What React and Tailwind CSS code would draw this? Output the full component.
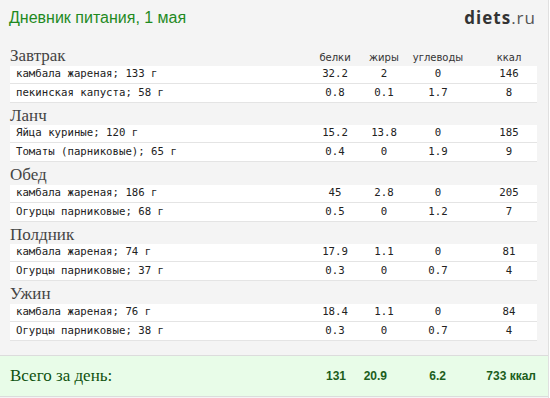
import React from "react";

const sections = [
  {
    title: "Завтрак",
    rows: [
      ["камбала жареная; 133 г", "32.2", "2", "0", "146"],
      ["пекинская капуста; 58 г", "0.8", "0.1", "1.7", "8"],
    ],
  },
  {
    title: "Ланч",
    rows: [
      ["Яйца куриные; 120 г", "15.2", "13.8", "0", "185"],
      ["Томаты (парниковые); 65 г", "0.4", "0", "1.9", "9"],
    ],
  },
  {
    title: "Обед",
    rows: [
      ["камбала жареная; 186 г", "45", "2.8", "0", "205"],
      ["Огурцы парниковые; 68 г", "0.5", "0", "1.2", "7"],
    ],
  },
  {
    title: "Полдник",
    rows: [
      ["камбала жареная; 74 г", "17.9", "1.1", "0", "81"],
      ["Огурцы парниковые; 37 г", "0.3", "0", "0.7", "4"],
    ],
  },
  {
    title: "Ужин",
    rows: [
      ["камбала жареная; 76 г", "18.4", "1.1", "0", "84"],
      ["Огурцы парниковые; 38 г", "0.3", "0", "0.7", "4"],
    ],
  },
];

const serif = "font-['Liberation_Serif',serif]";
const mono = "font-['DejaVu_Sans_Mono',monospace]";

function Cols({ vals, cls }) {
  return (
    <>
      <div className={`w-[50px] text-center ${cls}`}>{vals[0]}</div>
      <div className={`w-[48px] text-center ${cls}`}>{vals[1]}</div>
      <div className={`w-[60px] text-center ${cls}`}>{vals[2]}</div>
      <div className={`ml-[13px] w-[56px] text-center ${cls}`}>{vals[3]}</div>
    </>
  );
}

export default function App() {
  return (
    <div className="w-[549px] h-[398px] bg-[#f4f4f4] border-r border-[#e0e0e0] overflow-hidden">
      <div className="h-[34px] flex items-center justify-between pl-[9px] pr-[12px] pt-[1px]">
        <div className="font-['Liberation_Sans',sans-serif] text-[16px] text-[#1f8a1f]">
          Дневник питания, 1 мая
        </div>
        <div className="font-['Open_Sans',sans-serif] text-[17px] tracking-[1px] text-[#333] pt-[1px]">
          <span className="font-bold">diets</span>
          <span className="text-[#555]">.ru</span>
        </div>
      </div>
      <div className="pt-[9px] pl-[10px] pr-[11px]">
        {sections.map((s, si) => (
          <div key={si}>
            <div className={`${si % 2 === 0 ? "h-[23px]" : "h-[22px]"} pt-[3px] flex items-start`}>
              <div className={`w-[300px] ${serif} text-[17px] leading-[20px] text-[#444]`}>{s.title}</div>
              {si === 0 && (
                <Cols
                  vals={["белки", "жиры", "углеводы", "ккал"]}
                  cls="font-['DejaVu_Sans',sans-serif] text-[10px] leading-[20px] text-[#333] pt-[2px]"
                />
              )}
            </div>
            {s.rows.map((r, ri) => (
              <div
                key={ri}
                className={`${ri === 0 ? "h-[18px]" : "h-[19px]"} flex items-center bg-white border-b border-[#e4e4e4]`}
              >
                <div className={`w-[300px] pl-[6px] ${mono} text-[10.7px] text-[#222]`}>{r[0]}</div>
                <Cols vals={r.slice(1)} cls={`${mono} text-[10.7px] text-[#222]`} />
              </div>
            ))}
          </div>
        ))}
      </div>
      <div className="mt-[14px] h-[42px] bg-[#e8fce8] border-t border-b border-[#dcdcdc] flex items-center pl-[10px]">
        <div className={`w-[296px] ${serif} text-[17px] text-[#0f520f]`}>Всего за день:</div>
        <div className="flex font-['Liberation_Sans',sans-serif] font-bold text-[12px] text-[#1c5e1c]">
          <div className="w-[40px] text-right">131</div>
          <div className="w-[41px] text-right">20.9</div>
          <div className="w-[59px] text-right">6.2</div>
          <div className="w-[90px] text-right">733 ккал</div>
        </div>
      </div>
    </div>
  );
}
